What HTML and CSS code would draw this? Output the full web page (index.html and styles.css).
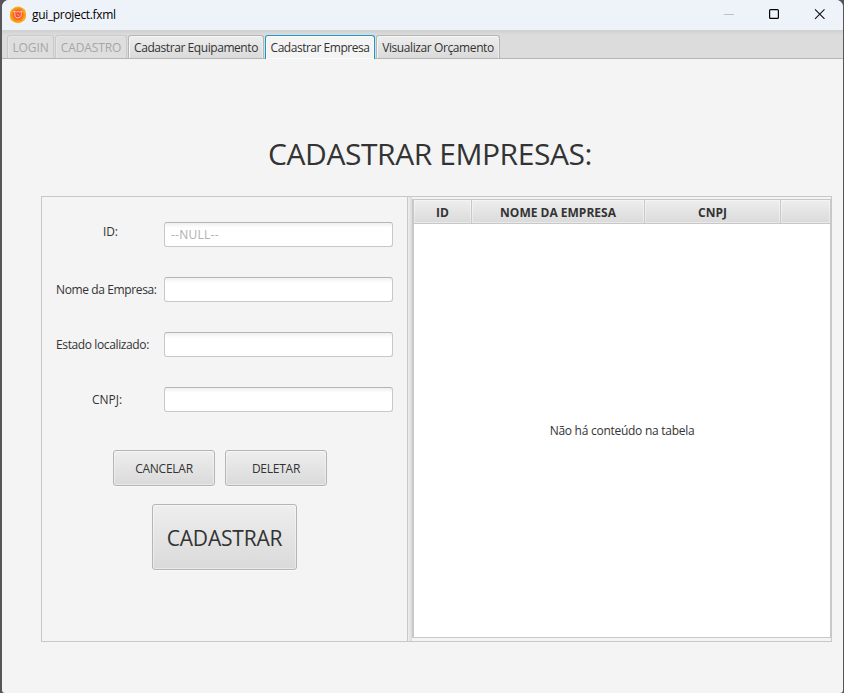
FILE: index.html
```html
<!DOCTYPE html>
<html lang="pt-BR">
<head>
<meta charset="utf-8">
<title>gui_project.fxml</title>
<link rel="stylesheet" href="styles.css">
</head>
<body>
<div class="window">
  <header class="titlebar">
    <svg class="logo" width="18" height="18" viewBox="0 0 18 18">
      <path d="M6 1.2Q9-.4 12 1.2L15.5 3.3Q17.3 5.5 17 9Q17.3 12.5 15.5 14.3L12 16.5Q9 18 6 16.5L2.5 14.5Q.6 12.5 1 9Q.6 5.5 2.5 3.5Z" fill="#fbab18"/>
      <path d="M5 2.5L12.5 2L16 9L12.5 15L5 15.5L1.5 9Z" fill="#f98b1c"/>
      <circle cx="9" cy="8.8" r="5.2" fill="#f7642b"/>
      <path d="M4.8 5.3L7.2 6Q9.2 5 11 6.1L13 5.3L12.2 7.8Q12.8 10.2 11 11.3Q9 12.6 7 11.4Q5.4 10.3 6 8Z" fill="#f4502b" stroke="#ffdcc0" stroke-width=".8"/>
      <path d="M8 8L10.5 10" stroke="#ffb58c" stroke-width=".8"/>
    </svg>
    <span class="title">gui_project.fxml</span>
    <svg class="controls" width="120" height="30" viewBox="0 0 120 30" fill="none">
      <path d="M5 14.5H15" stroke="#bfc2c5"/>
      <rect x="50.6" y="9.6" width="8.8" height="8.8" rx="1" stroke="#000" stroke-width="1.2"/>
      <path d="M96 9.3L105.5 18.8M105.5 9.3L96 18.8" stroke="#111" stroke-width="1.1"/>
    </svg>
  </header>
  <nav class="tabs">
    <div class="tab disabled t1"><span>LOGIN</span></div>
    <div class="tab disabled t2"><span>CADASTRO</span></div>
    <div class="tab t3"><span>Cadastrar Equipamento</span></div>
    <div class="tab selected t4"><span>Cadastrar Empresa</span></div>
    <div class="tab t5"><span>Visualizar Orçamento</span></div>
  </nav>
  <main>
    <h1>CADASTRAR EMPRESAS:</h1>
    <div class="split">
      <form class="form">
        <div class="row first"><label>ID:</label><input type="text" placeholder="--NULL--"></div>
        <div class="row"><label>Nome da Empresa:</label><input type="text"></div>
        <div class="row"><label>Estado localizado:</label><input type="text"></div>
        <div class="row"><label class="cnpj">CNPJ:</label><input type="text"></div>
        <div class="actions">
          <button type="button">CANCELAR</button>
          <button type="button">DELETAR</button>
        </div>
        <button type="button" class="primary">CADASTRAR</button>
      </form>
      <div class="divider"></div>
      <section class="table">
        <div class="head">
          <div>ID</div><div>NOME DA EMPRESA</div><div>CNPJ</div><div></div>
        </div>
        <div class="empty"><span>Não há conteúdo na tabela</span></div>
      </section>
    </div>
  </main>
</div>
</body>
</html>
```
FILE: styles.css
```css
* { box-sizing: border-box; }
body {
  margin: 0;
  height: 693px;
  overflow: hidden;
  background: #55565a;
  font-family: "Open Sans", "Noto Sans", sans-serif;
  font-size: 12px;
  line-height: 16px;
  color: #333;
}
.window {
  width: 841px;
  height: 693px;
  margin-left: 2px;
  background: #f4f4f4;
  border-radius: 7px 7px 3px 3px;
  overflow: hidden;
}
.titlebar {
  display: flex;
  align-items: center;
  height: 30px;
  padding-left: 7px;
  background: #eef3f9;
  color: #000;
}
.title { margin-left: 5px; letter-spacing: -0.33px; }
.controls { margin-left: auto; margin-right: 4px; }
.tabs {
  display: flex;
  gap: 1px;
  height: 29px;
  padding: 5px 0 0 5px;
  background: linear-gradient(#cfcfcf, #dcdcdc 5px, #dcdcdc);
  border-bottom: 1px solid #b5b5b5;
}
.tab {
  display: flex;
  justify-content: center;
  align-items: center;
  height: 23px;
  padding-top: 2px;
  border: 1px solid #b5b5b5;
  border-bottom: 0;
  border-radius: 3px 3px 0 0;
  background: linear-gradient(#eee, #dadada);
  box-shadow: inset 1px 1px #f6f6f6, inset -1px 0 #ececec;
  white-space: nowrap;
}
.tab.disabled { border-color: #cacaca; background: #dedede; box-shadow: inset 1px 1px #e5e5e5; color: #a6a6a6; }
.tab.selected { height: 24px; padding-bottom: 1px; background: #f4f4f4; border-color: #169ccb; box-shadow: inset 0 0 0 1px #fafcfd; }
.t1 { width: 47px; letter-spacing: -0.1px; }
.t2 { width: 72px; letter-spacing: -0.1px; }
.t3 { width: 136px; letter-spacing: -0.43px; }
.t4 { width: 110px; letter-spacing: -0.48px; }
.t5 { width: 124px; letter-spacing: -0.4px; }
main { padding: 75px 11px 0 39px; }
h1 {
  margin: 0;
  padding-right: 13px;
  height: 62px;
  font-size: 30px;
  line-height: 40px;
  font-weight: 400;
  text-align: center;
  letter-spacing: -0.43px;
}
.split { display: flex; height: 446px; border: 1px solid #c8c8c8; }
.form { width: 365px; padding-top: 25px; }
.row { display: flex; height: 55px; }
.row label {
  width: 122px;
  padding: 5px 0 0 14px;
  white-space: nowrap;
  letter-spacing: -0.38px;
}
.row.first label { padding: 2px 0 0 61px; letter-spacing: -0.2px; }
.row .cnpj { padding-left: 50px; letter-spacing: 0; }
.row input {
  width: 229px;
  height: 25px;
  padding: 0 6px;
  border: 1px solid #c8c8c8;
  border-top-color: #b5b5b5;
  border-radius: 3px;
  outline: 0;
  background: linear-gradient(#f0f0f0, #fff 5px);
  font: inherit;
  letter-spacing: 0.25px;
}
.row input::placeholder { color: #b0b0b0; opacity: 1; }
.actions { display: flex; gap: 10px; margin: 8px 0 18px 71px; }
button {
  width: 102px;
  height: 36px;
  padding: 2px 0 0;
  border: 1px solid #b5b5b5;
  border-radius: 3px;
  background: linear-gradient(#eee, #dadada);
  box-shadow: inset 0 0 0 1px rgba(255,255,255,.4), 0 1px #fafafa;
  color: #333;
  font: inherit;
  letter-spacing: -0.25px;
}
.primary { display: block; width: 145px; height: 66px; margin-left: 110px; font-size: 21px; letter-spacing: -0.2px; }
.divider { width: 5px; border-left: 1px solid #c8c8c8; background: linear-gradient(90deg, #eee, #dadada); }
.table {
  flex: 1;
  display: flex;
  flex-direction: column;
  margin: 2px 0 3px;
  border: 1px solid #c8c8c8;
  border-left-width: 2px;
  background: #fff;
}
.head {
  display: grid;
  grid-template-columns: 58px 173px 136px 1fr;
  height: 24px;
  border-bottom: 1px solid #c8c8c8;
  font-weight: 700;
}
.head div {
  padding-top: 5px;
  border-right: 1px solid #c8c8c8;
  background: linear-gradient(#eee, #dadada);
  box-shadow: inset 0 0 0 1px rgba(255,255,255,.4);
  text-align: center;
  line-height: 16px;
}
.head div:last-child { border-right: 0; }
.empty { flex: 1; display: flex; align-items: center; justify-content: center; letter-spacing: -0.27px; }
```
